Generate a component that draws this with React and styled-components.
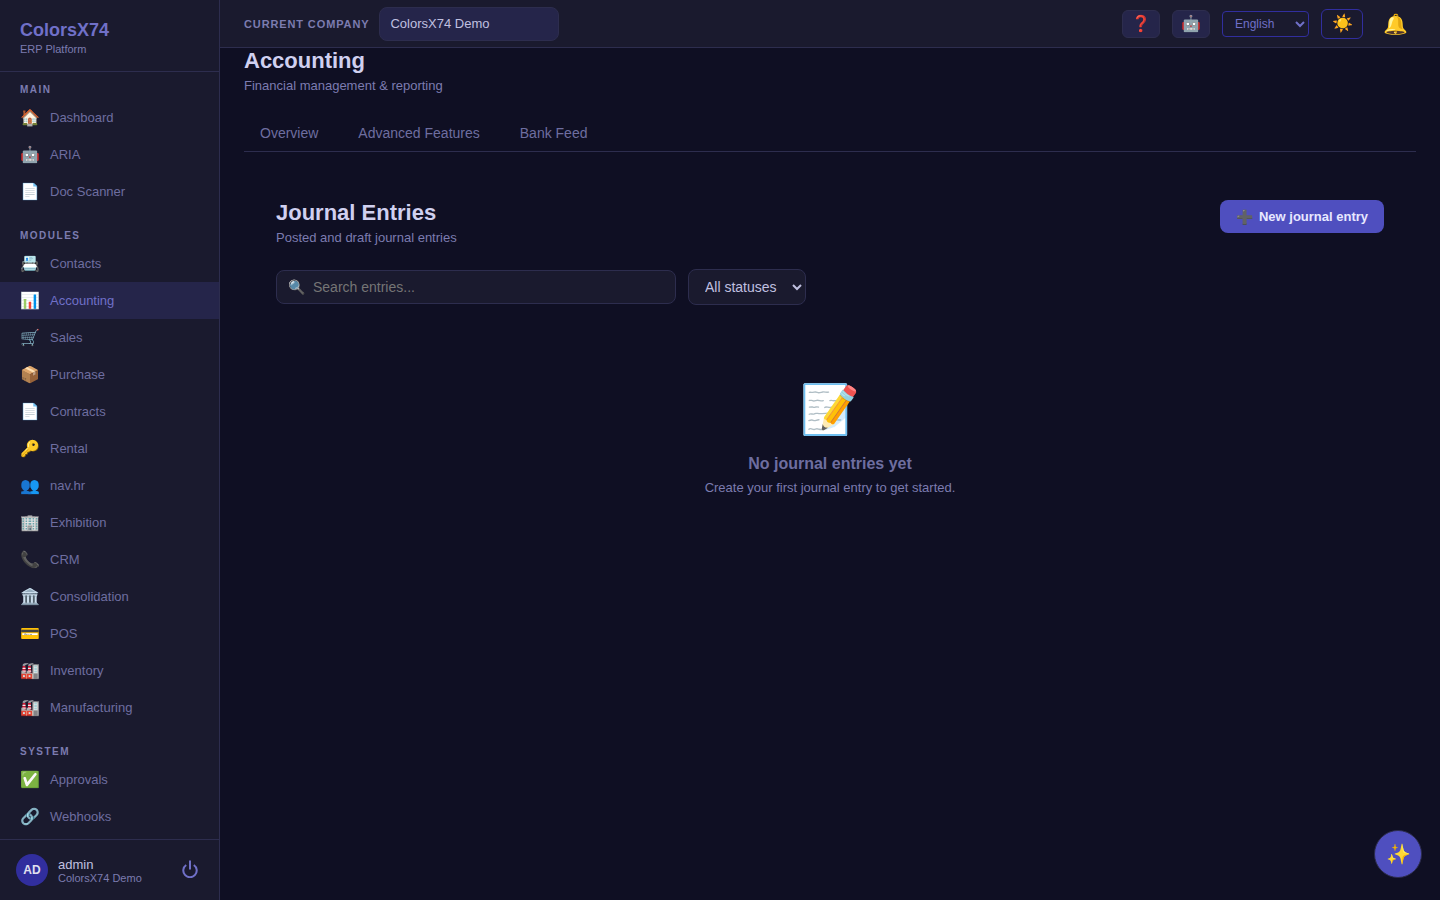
import React from 'react';
import styled, { createGlobalStyle } from 'styled-components';

const MENU = [
  {
    title: 'MAIN',
    items: [
      { icon: '🏠', label: 'Dashboard' },
      { icon: '🤖', label: 'ARIA' },
      { icon: '📄', label: 'Doc Scanner' },
    ],
  },
  {
    title: 'MODULES',
    items: [
      { icon: '📇', label: 'Contacts' },
      { icon: '📊', label: 'Accounting', active: true },
      { icon: '🛒', label: 'Sales' },
      { icon: '📦', label: 'Purchase' },
      { icon: '📄', label: 'Contracts' },
      { icon: '🔑', label: 'Rental' },
      { icon: '👥', label: 'nav.hr' },
      { icon: '🏢', label: 'Exhibition' },
      { icon: '📞', label: 'CRM' },
      { icon: '🏛️', label: 'Consolidation' },
      { icon: '💳', label: 'POS' },
      { icon: '🏭', label: 'Inventory' },
      { icon: '🏭', label: 'Manufacturing' },
    ],
  },
  {
    title: 'SYSTEM',
    items: [
      { icon: '✅', label: 'Approvals' },
      { icon: '🔗', label: 'Webhooks' },
    ],
  },
];

const GlobalStyle = createGlobalStyle`
  html, body {
    margin: 0;
    height: 100%;
    overflow: hidden;
    background: #0f0f23;
    font-family: "Liberation Sans", Arial, sans-serif;
  }
  * {
    box-sizing: border-box;
  }
`;

const Shell = styled.div`
  display: flex;
  width: 1440px;
  height: 900px;
`;

const Sidebar = styled.aside`
  display: flex;
  flex-direction: column;
  flex: 0 0 220px;
  background: #1a1a2e;
  border-right: 1px solid #2d2d4e;
`;

const Brand = styled.div`
  height: 72px;
  padding: 20px 20px 0;
  border-bottom: 1px solid #2d2d4e;
`;

const BrandName = styled.div`
  font-size: 18px;
  line-height: 21px;
  font-weight: 700;
  color: #7070c8;
`;

const BrandSub = styled.div`
  margin-top: 2px;
  font-size: 11px;
  line-height: 13px;
  color: #7c7cb0;
`;

const Nav = styled.nav`
  flex: 1;
  overflow: hidden;
`;

const Section = styled.div`
  padding-top: 12px;
  padding-bottom: 8px;
`;

const SectionTitle = styled.div`
  padding: 0 20px;
  font-size: 10px;
  line-height: 11px;
  height: 15px;
  font-weight: 700;
  letter-spacing: 1.5px;
  color: #7c7cb0;
`;

const NavItem = styled.a`
  display: flex;
  align-items: center;
  gap: 10px;
  height: 37px;
  padding: 0 20px;
  font-size: 13px;
  color: ${props => (props.$active ? '#7070c8' : '#6e6ea0')};
  background: ${props => (props.$active ? '#25254a' : 'transparent')};
`;

const NavIcon = styled.span`
  width: 20px;
  font-size: 16px;
  text-align: center;
`;

const UserBar = styled.div`
  display: flex;
  align-items: center;
  height: 61px;
  padding: 0 16px;
  border-top: 1px solid #2d2d4e;
`;

const Avatar = styled.div`
  display: flex;
  align-items: center;
  justify-content: center;
  width: 32px;
  height: 32px;
  border-radius: 50%;
  background: #312e9e;
  color: #e0e0f0;
  font-size: 12px;
  font-weight: 700;
`;

const UserInfo = styled.div`
  flex: 1;
  margin-left: 10px;
  padding-top: 2px;
`;

const UserName = styled.div`
  font-size: 13px;
  line-height: 15px;
  color: #c0c0e0;
`;

const UserCompany = styled.div`
  font-size: 11px;
  line-height: 13px;
  color: #7c7cb0;
`;

const PowerButton = styled.button`
  display: flex;
  padding: 0;
  margin: -2px 5px 0 0;
  border: none;
  background: none;
  color: #7070c8;
`;

const Main = styled.div`
  display: flex;
  flex-direction: column;
  flex: 1;
  min-width: 0;
`;

const Topbar = styled.header`
  display: flex;
  align-items: center;
  flex: 0 0 48px;
  padding: 0 24px;
  background: #1a1a2e;
  border-bottom: 1px solid #2d2d4e;
`;

const CompanyLabel = styled.span`
  font-size: 11px;
  font-weight: 700;
  letter-spacing: 0.88px;
  color: #7c7cb0;
`;

const CompanyBox = styled.div`
  display: flex;
  align-items: center;
  width: 180px;
  height: 34px;
  margin-left: 10px;
  padding: 0 10px;
  border: 1px solid #2d2d4e;
  border-radius: 8px;
  background: #25254a;
  font-size: 13px;
  color: #c0c0e0;
`;

const TopActions = styled.div`
  display: flex;
  align-items: center;
  gap: 12px;
  margin-left: auto;
`;

const IconButton = styled.button`
  display: flex;
  align-items: center;
  justify-content: center;
  width: 38px;
  height: 28px;
  padding: 0;
  border: 1px solid #2d2d4e;
  border-radius: 6px;
  background: #25254a;
  font-size: 16px;
`;

const LanguageSelect = styled.select`
  width: 87px;
  height: 26px;
  padding: 0 8px;
  border: 1px solid #312e9e;
  border-radius: 4px;
  background: transparent;
  color: #7070c8;
  font-family: inherit;
  font-size: 12px;
`;

const ThemeButton = styled.button`
  display: flex;
  align-items: center;
  justify-content: center;
  width: 42px;
  height: 30px;
  padding: 0;
  border: 1px solid #312e9e;
  border-radius: 6px;
  background: transparent;
  font-size: 17px;
`;

const BellButton = styled.button`
  display: flex;
  align-items: center;
  justify-content: center;
  width: 41px;
  height: 30px;
  padding: 0;
  border: none;
  background: none;
  font-size: 20px;
`;

const Content = styled.main`
  flex: 1;
  padding: 0 24px;
  overflow: hidden;
`;

const PageTitle = styled.h1`
  margin: 0;
  font-size: 22px;
  line-height: 26px;
  font-weight: 700;
  color: #d0d0f0;
`;

const PageSub = styled.p`
  margin: 4px 0 0;
  font-size: 13px;
  line-height: 15px;
  color: #7c7cb0;
`;

const Tabs = styled.div`
  display: flex;
  margin-top: 20px;
  border-bottom: 1px solid #2d2d4e;
`;

const Tab = styled.button`
  height: 38px;
  padding: 2px 16px 0;
  margin-right: 8px;
  border: none;
  background: none;
  font-family: inherit;
  font-size: 14px;
  color: #6e6ea0;
`;

const Panel = styled.section`
  padding: 48px 32px;
`;

const PanelHeader = styled.div`
  display: flex;
  align-items: flex-start;
  justify-content: space-between;
`;

const PanelTitle = styled.h2`
  margin: 0;
  font-size: 22px;
  line-height: 26px;
  font-weight: 700;
  color: #d0d0f0;
`;

const PanelSub = styled.p`
  margin: 4px 0 0;
  font-size: 13px;
  line-height: 15px;
  color: #7c7cb0;
`;

const PrimaryButton = styled.button`
  display: flex;
  align-items: center;
  gap: 6px;
  height: 33px;
  padding: 0 16px;
  border: none;
  border-radius: 8px;
  background: #4f4fbf;
  color: #e8e8ff;
  font-family: inherit;
  font-size: 13px;
  font-weight: 700;
`;

const ButtonIcon = styled.span`
  font-size: 14px;
`;

const Filters = styled.div`
  display: flex;
  align-items: center;
  gap: 12px;
  margin-top: 24px;
`;

const SearchBox = styled.label`
  display: flex;
  align-items: center;
  gap: 8px;
  width: 400px;
  height: 34px;
  padding: 0 11px;
  border: 1px solid #2d2d4e;
  border-radius: 8px;
  background: #1a1a2e;
  font-size: 14px;
`;

const SearchInput = styled.input`
  flex: 1;
  min-width: 0;
  padding: 0;
  border: none;
  outline: none;
  background: transparent;
  font-family: inherit;
  font-size: 14px;
  color: #d0d0f0;
  &::placeholder {
    color: #757575;
  }
`;

const StatusSelect = styled.select`
  width: 118px;
  height: 36px;
  padding: 0 12px;
  border: 1px solid #2d2d4e;
  border-radius: 8px;
  background: #1a1a2e;
  color: #c0c0e0;
  font-family: inherit;
  font-size: 14px;
`;

const Empty = styled.div`
  display: flex;
  flex-direction: column;
  align-items: center;
  padding-top: 77px;
`;

const EmptyIcon = styled.div`
  font-size: 48px;
  line-height: 56px;
`;

const EmptyTitle = styled.div`
  margin-top: 17px;
  font-size: 16px;
  line-height: 18px;
  font-weight: 700;
  color: #6e6ea0;
`;

const EmptyText = styled.div`
  margin-top: 7px;
  font-size: 13px;
  line-height: 15px;
  color: #7c7cb0;
`;

const Fab = styled.button`
  position: fixed;
  right: 18px;
  bottom: 22px;
  display: flex;
  align-items: center;
  justify-content: center;
  width: 48px;
  height: 48px;
  padding: 0;
  border: 1px solid #2d2d4e;
  border-radius: 50%;
  background: #4f4fbf;
  font-size: 20px;
`;

const PowerIcon = () => (
  <svg width="16" height="18" viewBox="0 0 16 18" fill="none" stroke="currentColor" strokeWidth="2">
    <path d="M8 0.5v9" />
    <path d="M4.2 5a6.7 6.7 0 1 0 7.6 0" />
  </svg>
);

export default function App() {
  return (
    <Shell>
      <GlobalStyle />
      <Sidebar>
        <Brand>
          <BrandName>ColorsX74</BrandName>
          <BrandSub>ERP Platform</BrandSub>
        </Brand>
        <Nav>
          {MENU.map(section => (
            <Section key={section.title}>
              <SectionTitle>{section.title}</SectionTitle>
              {section.items.map(item => (
                <NavItem key={item.label} $active={item.active}>
                  <NavIcon>{item.icon}</NavIcon>
                  {item.label}
                </NavItem>
              ))}
            </Section>
          ))}
        </Nav>
        <UserBar>
          <Avatar>AD</Avatar>
          <UserInfo>
            <UserName>admin</UserName>
            <UserCompany>ColorsX74 Demo</UserCompany>
          </UserInfo>
          <PowerButton aria-label="Sign out">
            <PowerIcon />
          </PowerButton>
        </UserBar>
      </Sidebar>
      <Main>
        <Topbar>
          <CompanyLabel>CURRENT COMPANY</CompanyLabel>
          <CompanyBox>ColorsX74 Demo</CompanyBox>
          <TopActions>
            <IconButton>❓</IconButton>
            <IconButton>🤖</IconButton>
            <LanguageSelect defaultValue="en">
              <option value="en">English</option>
            </LanguageSelect>
            <ThemeButton>☀️</ThemeButton>
            <BellButton>🔔</BellButton>
          </TopActions>
        </Topbar>
        <Content>
          <PageTitle>Accounting</PageTitle>
          <PageSub>Financial management &amp; reporting</PageSub>
          <Tabs>
            <Tab>Overview</Tab>
            <Tab>Advanced Features</Tab>
            <Tab>Bank Feed</Tab>
          </Tabs>
          <Panel>
            <PanelHeader>
              <div>
                <PanelTitle>Journal Entries</PanelTitle>
                <PanelSub>Posted and draft journal entries</PanelSub>
              </div>
              <PrimaryButton>
                <ButtonIcon>➕</ButtonIcon>
                New journal entry
              </PrimaryButton>
            </PanelHeader>
            <Filters>
              <SearchBox>
                <span>🔍</span>
                <SearchInput placeholder="Search entries..." />
              </SearchBox>
              <StatusSelect defaultValue="all">
                <option value="all">All statuses</option>
              </StatusSelect>
            </Filters>
            <Empty>
              <EmptyIcon>📝</EmptyIcon>
              <EmptyTitle>No journal entries yet</EmptyTitle>
              <EmptyText>Create your first journal entry to get started.</EmptyText>
            </Empty>
          </Panel>
        </Content>
      </Main>
      <Fab>✨</Fab>
    </Shell>
  );
}
